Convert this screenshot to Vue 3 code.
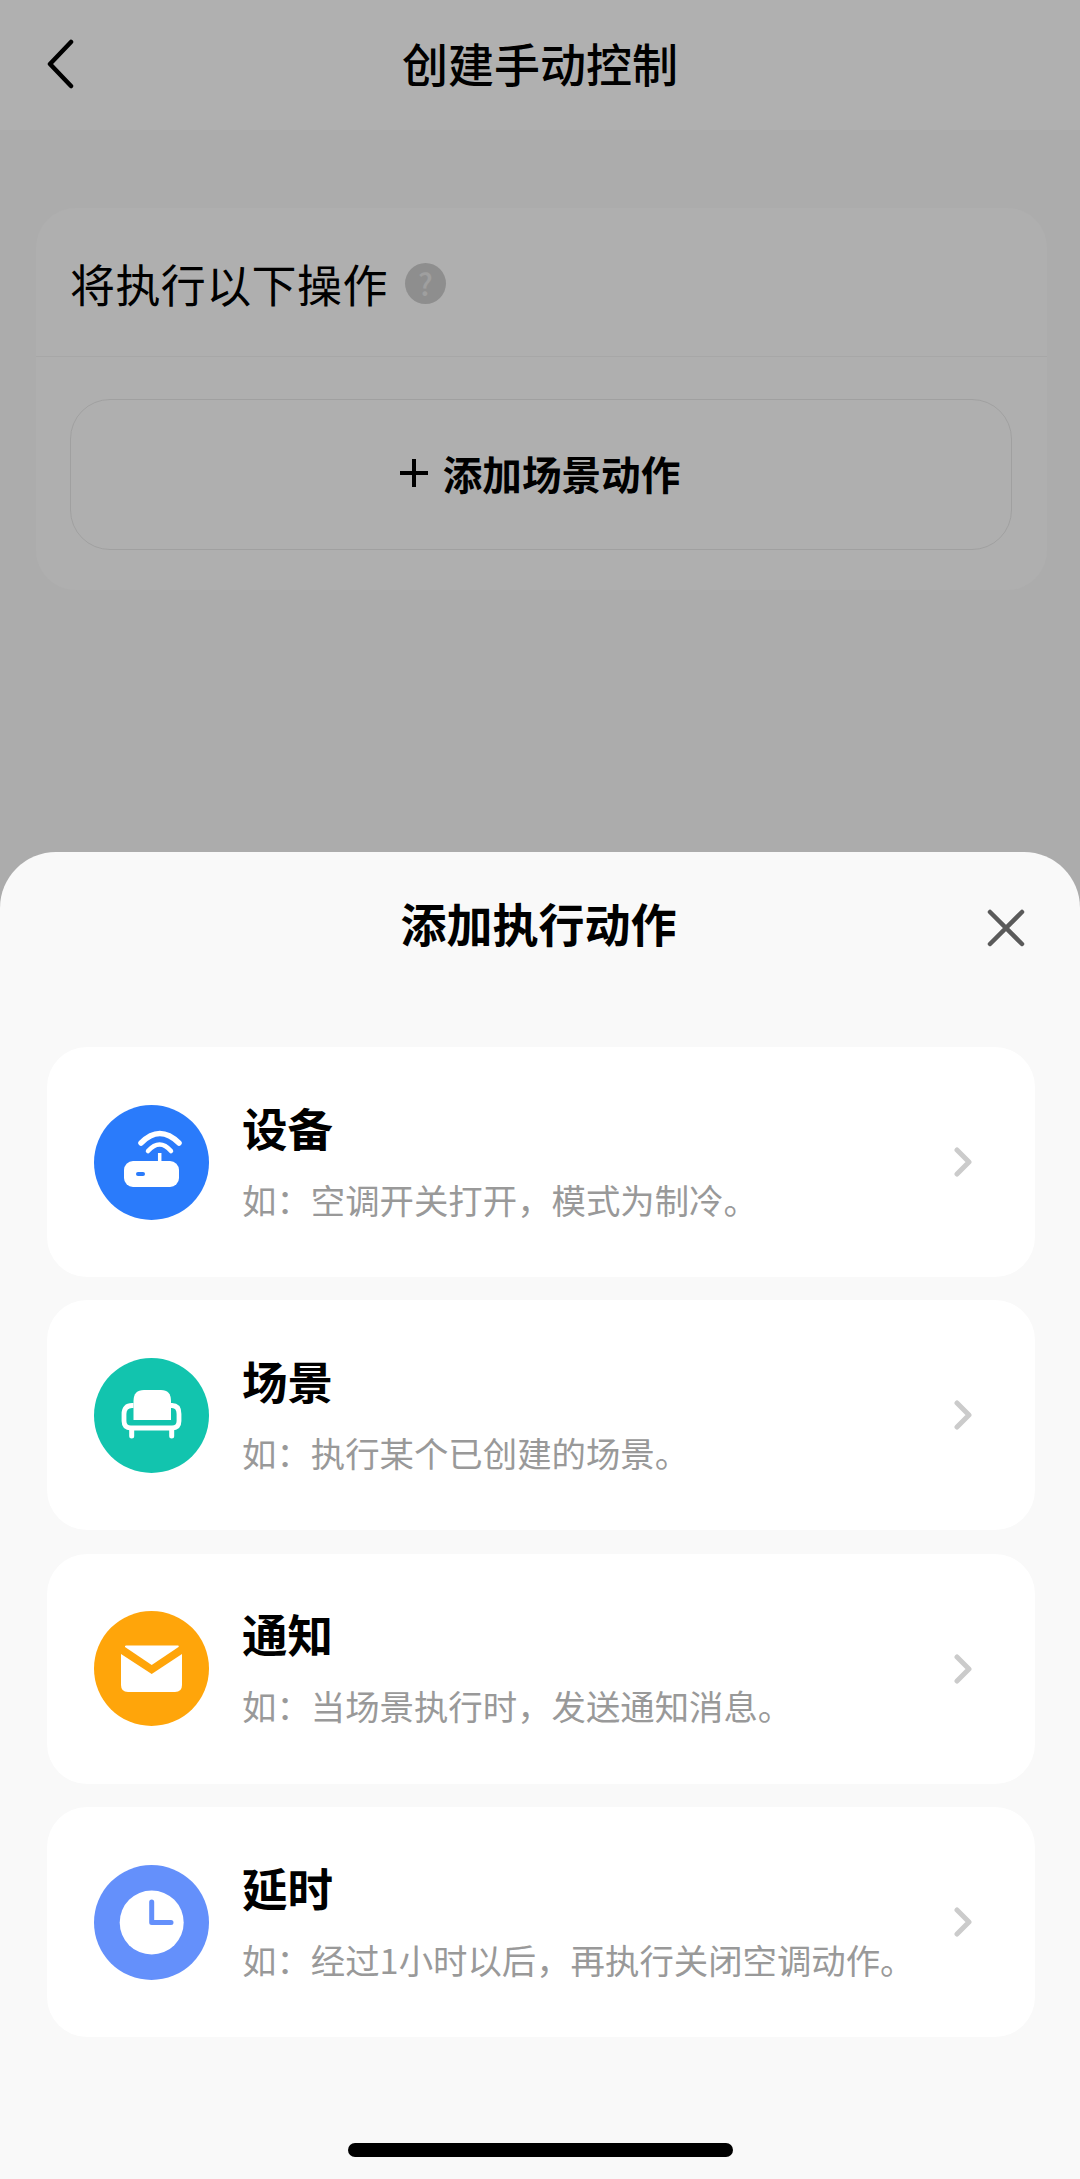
<script setup>
const actions = [
  { key: 'device', title: '设备', desc: '如：空调开关打开，模式为制冷。', color: '#2a7bfb' },
  { key: 'scene', title: '场景', desc: '如：执行某个已创建的场景。', color: '#12c4ae' },
  { key: 'notice', title: '通知', desc: '如：当场景执行时，发送通知消息。', color: '#ffa50a' },
  { key: 'delay', title: '延时', desc: '如：经过1小时以后，再执行关闭空调动作。', color: '#6490fb' }
]
</script>

<template>
  <div class="page">
    <header class="nav">
      <svg class="back" width="30" height="50" viewBox="0 0 30 50">
        <path d="M26 3 L5 25 L26 47" fill="none" stroke="#000" stroke-width="4.5" stroke-linecap="round" stroke-linejoin="round" />
      </svg>
      <h1 class="nav-title">创建手动控制</h1>
    </header>

    <section class="panel">
      <div class="panel-head">
        <span class="panel-title">将执行以下操作</span>
        <span class="help">?</span>
      </div>
      <div class="panel-body">
        <div class="add-btn">
          <svg width="30" height="30" viewBox="0 0 30 30">
            <path d="M15 1 V29 M1 15 H29" stroke="#000" stroke-width="4" fill="none" />
          </svg>
          <span>添加场景动作</span>
        </div>
      </div>
    </section>

    <div class="mask"></div>

    <div class="sheet">
      <div class="sheet-head">
        <h2 class="sheet-title">添加执行动作</h2>
        <svg class="close" width="38" height="38" viewBox="0 0 38 38">
          <path d="M3 3 L35 35 M35 3 L3 35" stroke="#5a5a5a" stroke-width="4.5" stroke-linecap="round" fill="none" />
        </svg>
      </div>

      <div class="list">
        <div v-for="item in actions" :key="item.key" class="row">
          <div class="circle" :style="{ background: item.color }">
            <svg width="115" height="115" viewBox="0 0 115 115">
              <g v-if="item.key === 'device'">
                <path d="M47 38 Q65.700 19 85 38" fill="none" stroke="#fff" stroke-width="5.500" stroke-linecap="round" />
                <path d="M54 46 Q65.700 33 77 46" fill="none" stroke="#fff" stroke-width="4.500" stroke-linecap="round" />
                <path d="M65.700 48 V57" stroke="#fff" stroke-width="3.500" />
                <rect x="30" y="56" width="55" height="26" rx="9" fill="#fff" />
                <rect x="42" y="67" width="9" height="4" rx="2" :fill="item.color" />
              </g>
              <g v-else-if="item.key === 'scene'">
                <path d="M39.500 43 Q39.500 32 50 32 H67 Q77 32 77 43 V62 H39.500 Z" fill="#fff" />
                <path d="M39.500 47.500 H38 Q30 47.500 30 56 V63 Q30 70 37 70 H78 Q85 70 85 63 V56 Q85 47.500 78 47.500 H77" fill="none" stroke="#fff" stroke-width="4.800" />
                <path d="M37.700 71 V78 M77.700 71 V78" stroke="#fff" stroke-width="5" stroke-linecap="round" fill="none" />
              </g>
              <g v-else-if="item.key === 'notice'">
                <path d="M32 34.500 H84 Q85.500 34.500 84.500 36 L57.700 54 L31 36 Q30.500 34.500 32 34.500 Z" fill="#fff" />
                <path d="M27 43 L57.700 63 L88 43 V74 Q88 81 81 81 H34 Q27 81 27 74 Z" fill="#fff" />
              </g>
              <g v-else>
                <circle cx="57.700" cy="57.500" r="32" fill="#fff" />
                <path d="M57.700 37 V57.500 H77" fill="none" :stroke="item.color" stroke-width="5" stroke-linecap="round" stroke-linejoin="round" />
              </g>
            </svg>
          </div>
          <div class="texts">
            <div class="row-title">{{ item.title }}</div>
            <div class="row-desc">{{ item.desc }}</div>
          </div>
          <svg class="arrow" width="20" height="32" viewBox="0 0 20 32">
            <path d="M3 4 L15 16 L3 28" fill="none" stroke="#cbcbcb" stroke-width="5" stroke-linecap="round" stroke-linejoin="round" />
          </svg>
        </div>
      </div>

      <div class="home-bar"></div>
    </div>
  </div>
</template>

<style>
html,
body {
  margin: 0;
  padding: 0;
}
</style>

<style scoped>
.page {
  position: relative;
  width: 1080px;
  height: 2179px;
  overflow: hidden;
  background: #f7f7f7;
  font-family: "Noto Sans CJK SC", "Noto Sans", sans-serif;
  color: #000;
}

.nav {
  position: relative;
  height: 130px;
  background: #fcfcfc;
  display: flex;
  align-items: center;
  justify-content: center;
}

.back {
  position: absolute;
  left: 45px;
  top: 39px;
}

.nav-title {
  margin: 0 0 6px;
  font-size: 46px;
  font-weight: 500;
  line-height: 64px;
}

.panel {
  margin: 78px 33px 0 36px;
  height: 382px;
  background: #fbfbfb;
  border-radius: 40px;
}

.panel-head {
  box-sizing: border-box;
  height: 149px;
  padding: 3px 0 0 34px;
  display: flex;
  align-items: center;
  gap: 17px;
  border-bottom: 1px solid #f0f0f0;
}

.panel-title {
  font-size: 45px;
  letter-spacing: 0.4px;
  line-height: 60px;
}

.help {
  width: 41px;
  height: 41px;
  border-radius: 50%;
  background: #cccccc;
  color: #e4e4e4;
  font-size: 30px;
  font-weight: 500;
  line-height: 41px;
  text-align: center;
}

.panel-body {
  padding: 42px 35px 0 34px;
}

.add-btn {
  box-sizing: border-box;
  height: 151px;
  padding: 0 3px 4px 0;
  border: 1px solid #e6e6e6;
  border-radius: 40px;
  display: flex;
  align-items: center;
  justify-content: center;
  gap: 14px;
  font-size: 39.6px;
  font-weight: 700;
}

.mask {
  position: absolute;
  inset: 0;
  background: rgba(0, 0, 0, 0.3);
}

.sheet {
  position: absolute;
  left: 0;
  right: 0;
  top: 852px;
  bottom: 0;
  background: #f9f9f9;
  border-radius: 56px 56px 0 0;
}

.sheet-head {
  position: relative;
  box-sizing: border-box;
  height: 195px;
  display: flex;
  justify-content: center;
  padding: 38px 3px 0 0;
}

.sheet-title {
  margin: 0;
  font-size: 46px;
  font-weight: 700;
  line-height: 64px;
}

.close {
  position: absolute;
  right: 55px;
  top: 57px;
}

.list {
  margin: 0 45px 0 47px;
  display: flex;
  flex-direction: column;
  gap: 23.4px;
}

.row {
  height: 230px;
  background: #fff;
  border-radius: 40px;
  display: flex;
  align-items: center;
  padding: 0 61px 0 47px;
}

.circle {
  width: 115px;
  height: 115px;
  border-radius: 50%;
  flex-shrink: 0;
}

.circle svg {
  display: block;
}

.texts {
  flex: 1;
  margin-left: 33px;
  padding-bottom: 3px;
}

.row-title {
  font-size: 45.5px;
  font-weight: 700;
  line-height: 60px;
  margin-top: -2px;
}

.row-desc {
  margin-top: 18px;
  font-size: 34.4px;
  line-height: 48px;
  color: #999;
  white-space: nowrap;
}

.arrow {
  flex-shrink: 0;
}

.home-bar {
  position: absolute;
  left: 348px;
  top: 1291px;
  width: 385px;
  height: 14px;
  border-radius: 7px;
  background: #000;
}
</style>
